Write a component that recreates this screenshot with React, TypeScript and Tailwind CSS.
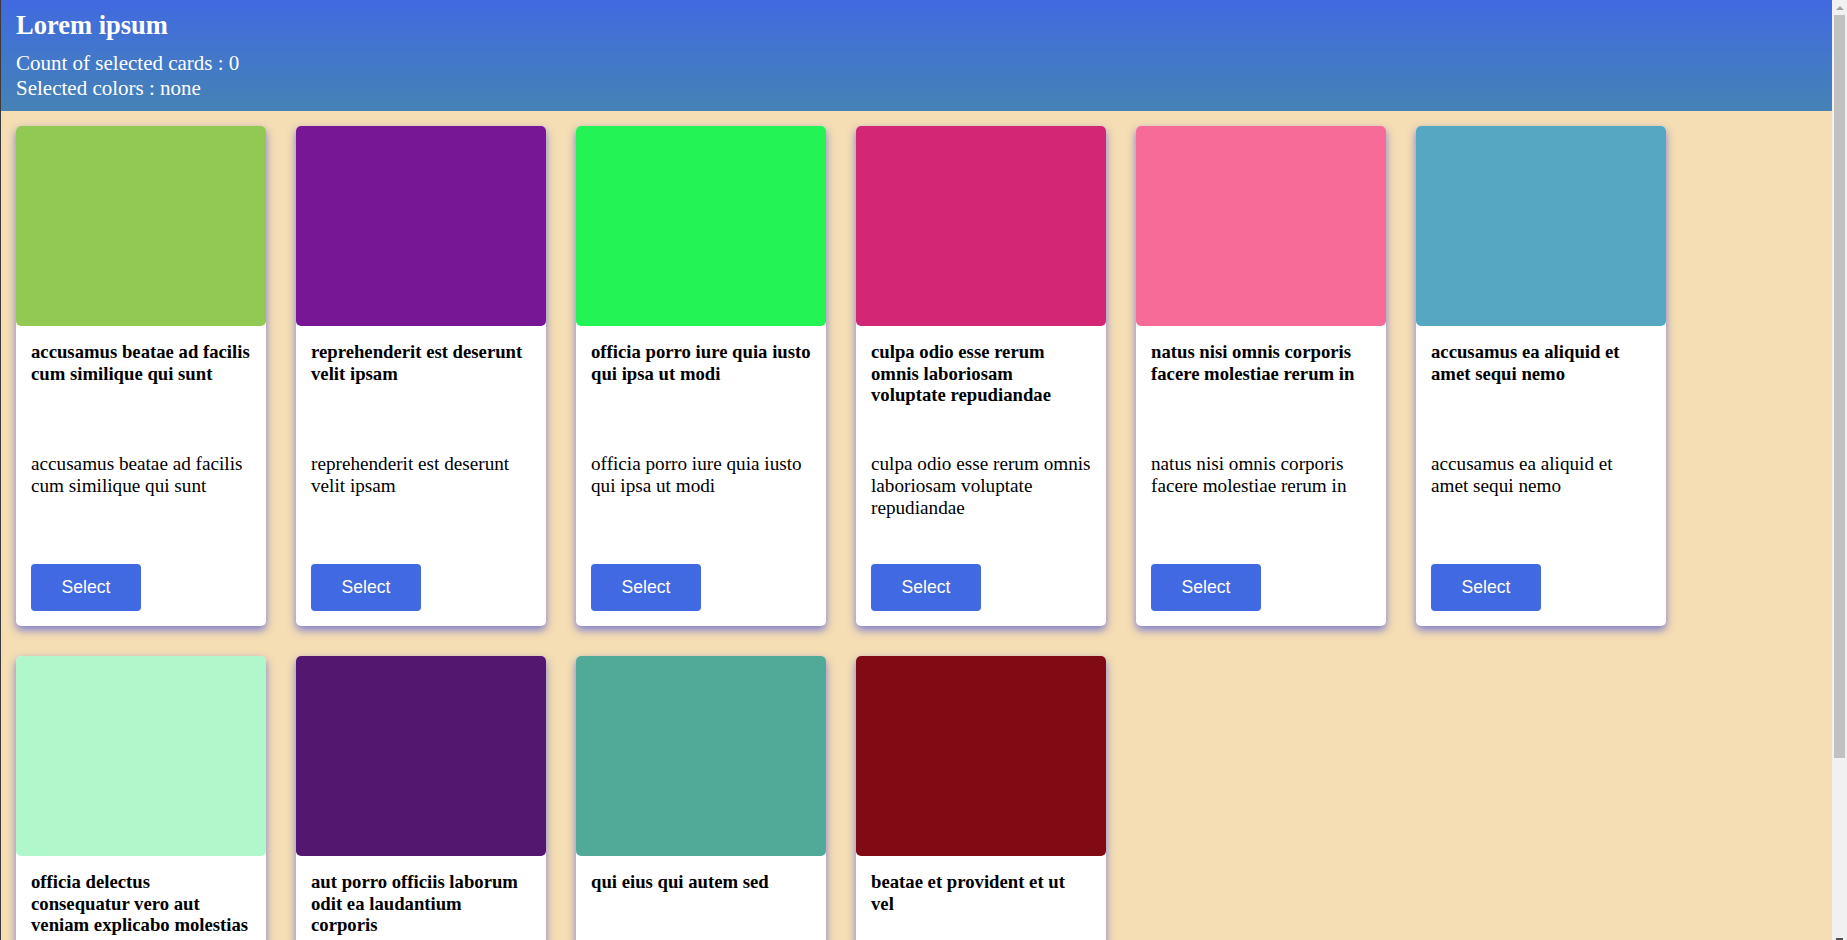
import React, { useState } from 'react';

interface Photo {
  id: number;
  title: string;
  color: string;
}

const PHOTOS: Photo[] = [
  { id: 1, title: 'accusamus beatae ad facilis cum similique qui sunt', color: '#92c952' },
  { id: 2, title: 'reprehenderit est deserunt velit ipsam', color: '#771796' },
  { id: 3, title: 'officia porro iure quia iusto qui ipsa ut modi', color: '#24f355' },
  { id: 4, title: 'culpa odio esse rerum omnis laboriosam voluptate repudiandae', color: '#d32776' },
  { id: 5, title: 'natus nisi omnis corporis facere molestiae rerum in', color: '#f66b97' },
  { id: 6, title: 'accusamus ea aliquid et amet sequi nemo', color: '#56a8c2' },
  { id: 7, title: 'officia delectus consequatur vero aut veniam explicabo molestias', color: '#b0f7cc' },
  { id: 8, title: 'aut porro officiis laborum odit ea laudantium corporis', color: '#54176f' },
  { id: 9, title: 'qui eius qui autem sed', color: '#51aa97' },
  { id: 10, title: 'beatae et provident et ut vel', color: '#810b14' }
];

const Card: React.FC<{ photo: Photo; selected: boolean; onToggle: () => void }> = ({
  photo,
  selected,
  onToggle
}) => {
  return (
    <div className="m-[15px] w-[250px] flex flex-col bg-white rounded-[5px] shadow-[0_4px_8px_0_rgba(70,80,220,0.7)]">
      {/* colour swatch stands in for the placeholder image */}
      <div className="h-[200px] w-full rounded-[5px]" style={{ backgroundColor: photo.color }} />

      <div className="flex flex-col px-[15px] pt-[15px] pb-[15px]">
        <h3 className="h-[112px] text-[18.72px] font-bold leading-[21.5px] text-black">
          {photo.title}
        </h3>
        <p className="h-[111px] text-[19.2px] leading-[22px] text-black">{photo.title}</p>
        <button
          type="button"
          onClick={onToggle}
          className={`w-[110px] h-[47px] rounded-[4px] text-white text-[17.6px] font-['Liberation_Sans',Arial,sans-serif] cursor-pointer ${
            selected ? 'bg-[#2e8b57]' : 'bg-[#4169e1]'
          }`}
        >
          {selected ? 'Unselect' : 'Select'}
        </button>
      </div>
    </div>
  );
};

// classic-style window scrollbar
const ScrollRail = () => (
  <div className="w-[15px] shrink-0 flex flex-col items-center bg-[#f1f1f1]">
    <div className="h-[15px] flex items-center justify-center">
      <div className="w-0 h-0 border-x-[4px] border-b-[4px] border-x-transparent border-b-[#a3a3a3]" />
    </div>
    <div className="w-[11px] h-[743px] bg-[#c1c1c1]" />
    <div className="flex-1" />
    <div className="h-[3px] flex items-end justify-center">
      <div className="w-[7px] h-[2px] bg-[#505050]" />
    </div>
  </div>
);

export default function App() {
  const [selected, setSelected] = useState<number[]>([]);

  const toggle = (id: number) =>
    setSelected((prev) => (prev.includes(id) ? prev.filter((x) => x !== id) : [...prev, id]));

  const colors = PHOTOS.filter((p) => selected.includes(p.id)).map((p) => p.color);

  return (
    <div className="h-screen flex overflow-hidden">
      <div className="flex-1 overflow-hidden bg-[#f5deb3] border-l border-[#3a3a3a] font-['Liberation_Serif','Times_New_Roman',serif]">
        <header className="bg-gradient-to-b from-[#4169e1] to-[#4682b4] px-[15px] pt-[10px] pb-[10px] text-white">
          <h1 className="text-[26.5px] font-bold leading-[31px]">Lorem ipsum</h1>
          <div className="mt-[10px] text-[21px] leading-[25px]">
            <div>Count of selected cards : {selected.length}</div>
            <div>Selected colors : {colors.length ? colors.join(', ') : 'none'}</div>
          </div>
        </header>

        {/* Cards */}
        <div className="flex flex-wrap">
          {PHOTOS.map((p) => (
            <Card key={p.id} photo={p} selected={selected.includes(p.id)} onToggle={() => toggle(p.id)} />
          ))}
        </div>
      </div>
      <ScrollRail />
    </div>
  );
}
